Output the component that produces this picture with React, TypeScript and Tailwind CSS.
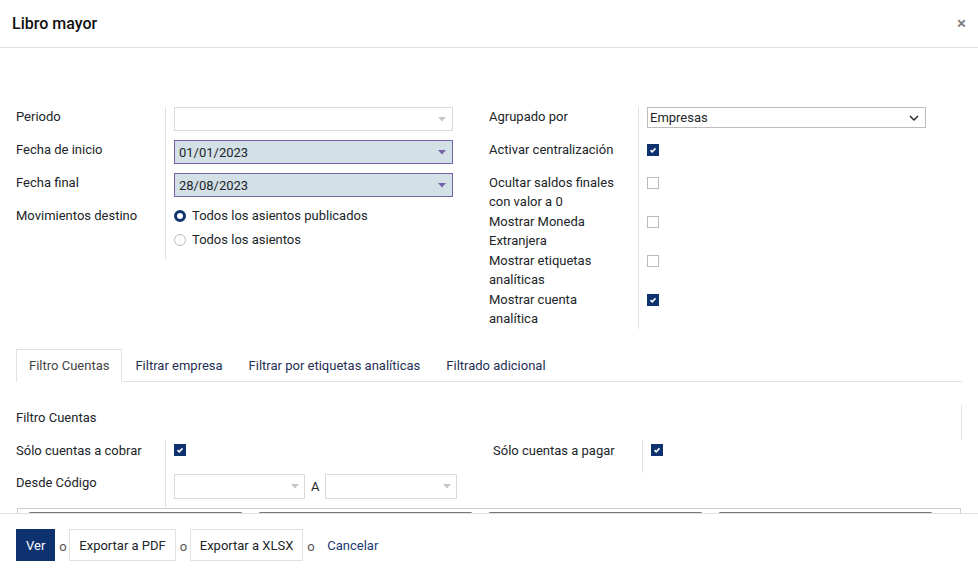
import React from 'react';

const navy = 'bg-[#0e3170]';

const Check = ({ on }: { on: boolean }) =>
  on ? (
    <span className={`flex h-[12px] w-[12px] items-center justify-center ${navy}`}>
      <svg width="8" height="8" viewBox="0 0 8 8">
        <path d="M1.5 4.2 L3.2 5.8 L6.5 2.4" stroke="#fff" strokeWidth="1.6" fill="none" />
      </svg>
    </span>
  ) : (
    <span className="block h-[12px] w-[12px] border border-[#b6bcc3] bg-white" />
  );

const Caret = ({ color }: { color: string }) => (
  <svg width="8" height="5" viewBox="0 0 8 5" className="shrink-0">
    <path d="M0 0 H8 L4 4.5 Z" fill={color} />
  </svg>
);

const Radio = ({ on, label }: { on: boolean; label: string }) => (
  <div className="flex h-[19px] items-center gap-[6px]">
    {on ? (
      <span className="block h-[12px] w-[12px] rounded-full border-[3.5px] border-[#0e3170] bg-white" />
    ) : (
      <span className="block h-[12px] w-[12px] rounded-full border border-[#b6bcc3] bg-white" />
    )}
    <span>{label}</span>
  </div>
);

const rightRows = [
  { label: ['Ocultar saldos finales', 'con valor a 0'], on: false },
  { label: ['Mostrar Moneda', 'Extranjera'], on: false },
  { label: ['Mostrar etiquetas', 'analíticas'], on: false },
  { label: ['Mostrar cuenta', 'analítica'], on: true },
];

const tabs = ['Filtro Cuentas', 'Filtrar empresa', 'Filtrar por etiquetas analíticas', 'Filtrado adicional'];

export default function App() {
  return (
    <div className="flex h-[572px] w-[978px] flex-col overflow-hidden bg-white font-['Roboto',sans-serif] text-[13px] leading-[19px] text-[#212529]">
      {/* Header */}
      <div className="flex h-[48px] shrink-0 items-center justify-between border-b border-[#dee2e6] pl-[12px] pr-[12px]">
        <h4 className="text-[16px] font-medium leading-none text-[#111]">Libro mayor</h4>
        <span className="text-[17px] font-semibold leading-none text-[#808080]">×</span>
      </div>

      {/* Body */}
      <div className="h-[465px] shrink-0 overflow-hidden px-4 pt-[59px]">
        <div className="flex">
          {/* Left group */}
          <div className="grid w-[473px] grid-cols-[149px_1fr] content-start">
            <div className="h-[33px]">Periodo</div>
            <div className="h-[33px] border-l border-[#dee2e6] pl-2">
              <div className="flex h-[24px] w-[279px] items-center justify-end border border-[#d9d9d9] pr-[6px]">
                <Caret color="#c8c8c8" />
              </div>
            </div>
            <div className="h-[33px]">Fecha de inicio</div>
            <div className="h-[33px] border-l border-[#dee2e6] pl-2">
              <div className="flex h-[24px] w-[279px] items-center justify-between border border-[#7463a8] bg-[#d3e0e6] pl-[4px] pr-[6px]">
                <span>01/01/2023</span>
                <Caret color="#7463a8" />
              </div>
            </div>
            <div className="h-[33px]">Fecha final</div>
            <div className="h-[33px] border-l border-[#dee2e6] pl-2">
              <div className="flex h-[24px] w-[279px] items-center justify-between border border-[#7463a8] bg-[#d3e0e6] pl-[4px] pr-[6px]">
                <span>28/08/2023</span>
                <Caret color="#7463a8" />
              </div>
            </div>
            <div className="h-[54px]">Movimientos destino</div>
            <div className="flex h-[54px] flex-col gap-[5px] border-l border-[#dee2e6] pl-2">
              <Radio on label="Todos los asientos publicados" />
              <Radio on={false} label="Todos los asientos" />
            </div>
          </div>

          {/* Right group */}
          <div className="grid flex-1 grid-cols-[149px_1fr] content-start">
            <div className="h-[33px]">Agrupado por</div>
            <div className="h-[33px] border-l border-[#dee2e6] pl-2">
              <div className="flex h-[21px] w-[279px] items-center justify-between border border-[#bdbdbd] pl-[2px] pr-[6px]">
                <span>Empresas</span>
                <svg width="10" height="6" viewBox="0 0 10 6">
                  <path d="M1 1 L5 5 L9 1" stroke="#222" strokeWidth="1.4" fill="none" />
                </svg>
              </div>
            </div>
            <div className="h-[33px]">Activar centralización</div>
            <div className="h-[33px] border-l border-[#dee2e6] pl-2 pt-[4px]">
              <Check on />
            </div>
            {rightRows.map((r) => (
              <React.Fragment key={r.label[0]}>
                <div className="h-[39px]">
                  {r.label[0]}
                  <br />
                  {r.label[1]}
                </div>
                <div className="h-[39px] border-l border-[#dee2e6] pl-2 pt-[4px]">
                  <Check on={r.on} />
                </div>
              </React.Fragment>
            ))}
          </div>
        </div>

        {/* Tabs */}
        <div className="mt-[20px] flex h-[33px] border-b border-[#dee2e6]">
          {tabs.map((t, i) => (
            <div
              key={t}
              className={
                i === 0
                  ? '-mb-px flex h-[33px] items-center border border-b-white border-[#dee2e6] bg-white px-[12px] text-[#444]'
                  : 'flex h-[32px] items-center px-[13px] text-[#1f2f55]'
              }
            >
              {t}
            </div>
          ))}
        </div>

        {/* Tab content */}
        <div className="mt-[23px] h-[35px] border-r border-[#dee2e6] pt-[3px]">Filtro Cuentas</div>
        <div className="flex">
          <div className="grid w-[477px] grid-cols-[149px_1fr] content-start">
            <div className="h-[33px] pt-[1px]">Sólo cuentas a cobrar</div>
            <div className="h-[33px] border-l border-[#dee2e6] pl-2 pt-[4px]">
              <Check on />
            </div>
            <div className="h-[34px]">Desde Código</div>
            <div className="flex h-[34px] items-start gap-[6px] border-l border-[#dee2e6] pl-2 pt-[1px]">
              <div className="flex h-[25px] w-[131px] items-center justify-end border border-[#d9d9d9] pr-[5px]">
                <Caret color="#c8c8c8" />
              </div>
              <span className="pt-[3px]">A</span>
              <div className="flex h-[25px] w-[132px] items-center justify-end border border-[#d9d9d9] pr-[5px]">
                <Caret color="#c8c8c8" />
              </div>
            </div>
          </div>
          <div className="grid flex-1 grid-cols-[149px_1fr] content-start">
            <div className="h-[33px] pt-[1px]">Sólo cuentas a pagar</div>
            <div className="h-[33px] border-l border-[#dee2e6] pl-2 pt-[4px]">
              <Check on />
            </div>
          </div>
        </div>
        <div className="ml-px mt-px flex h-[20px] w-[944px] gap-[15px] border border-b-0 border-[#cfcfcf] pl-[10px] pt-[3px]">
          {[0, 1, 2, 3].map((k) => (
            <div key={k} className="h-[10px] w-[215px] rounded-t-[3px] border-t-2 border-[#777]" />
          ))}
        </div>
      </div>

      {/* Footer */}
      <div className="flex h-[59px] shrink-0 items-start gap-1 border-t border-[#dee2e6] px-4 pt-[15px]">
        <button className={`h-[32px] px-[10px] text-[13px] text-white ${navy}`}>Ver</button>
        <span className="w-[6px] self-end pb-[16px] text-[#555]">o</span>
        <button className="h-[32px] border border-[#dee2e6] bg-white px-[9px] text-[13px] text-[#212529]">Exportar a PDF</button>
        <span className="w-[6px] self-end pb-[16px] text-[#555]">o</span>
        <button className="h-[32px] border border-[#dee2e6] bg-white px-[9px] text-[13px] text-[#212529]">Exportar a XLSX</button>
        <span className="w-[6px] self-end pb-[16px] text-[#555]">o</span>
        <button className="h-[32px] px-[10px] text-[13px] text-[#1b3a73]">Cancelar</button>
      </div>
    </div>
  );
}
